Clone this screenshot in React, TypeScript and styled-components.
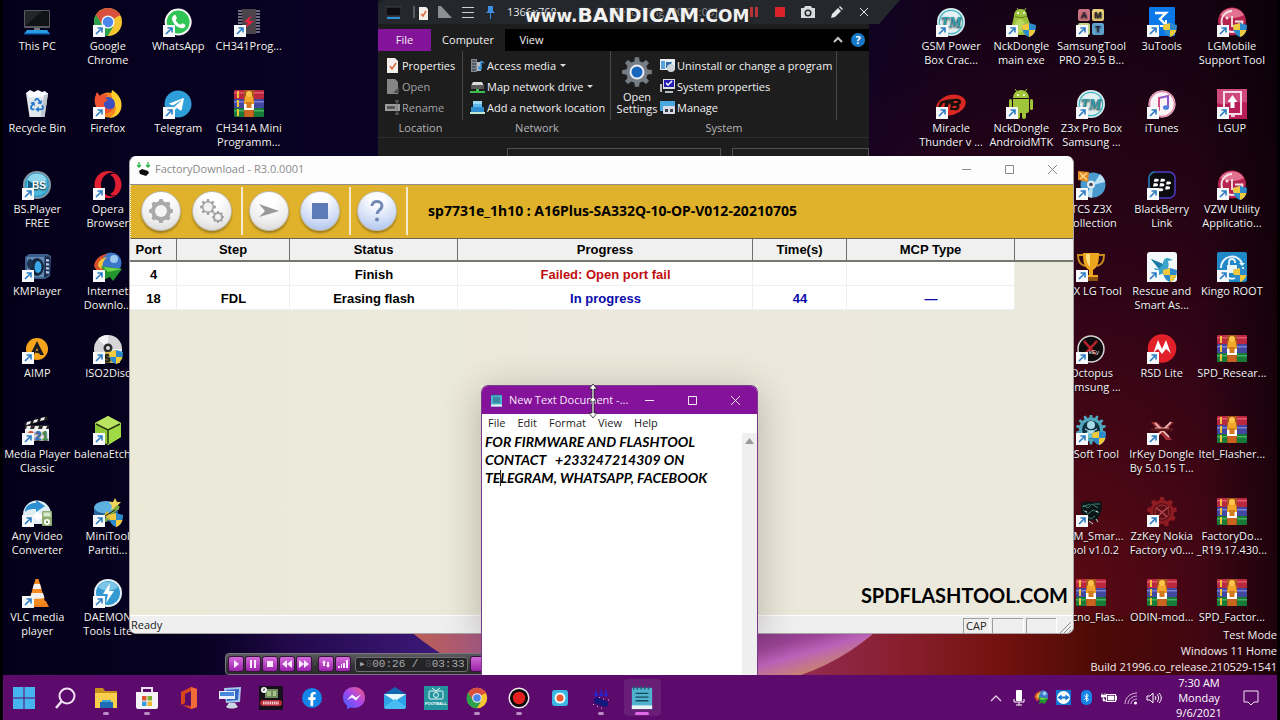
import React from "react";
import styled, { createGlobalStyle } from "styled-components";
import {
  FaBlackberry,
  FaBluetoothB,
  FaFacebookF,
  FaOpera,
  FaRecycle,
  FaTelegramPlane,
} from "react-icons/fa";

const UI_FONT = `"Open Sans", "Noto Sans", sans-serif`;

const GlobalStyle = createGlobalStyle`
  *, *::before, *::after { box-sizing: border-box; }
  html, body { margin: 0; background: #000; }
  body { font-family: ${UI_FONT}; font-size: 11px; line-height: 14px; }
  button, textarea { font: inherit; color: inherit; }
  button { background: none; border: 0; padding: 0; margin: 0; }
  svg { display: block; }
  h1, h2, p, ul { margin: 0; padding: 0; font-size: inherit; font-weight: inherit; }
  li { list-style: none; }
`;

/* ---------- icons ---------- */

type IconProps = { size?: number };

const Svg = ({ size = 30, box = 30, children }: { size?: number; box?: number; children: React.ReactNode }) => (
  <svg width={size} height={size} viewBox={`0 0 ${box} ${box}`} aria-hidden="true">
    {children}
  </svg>
);

const PcIcon = () => (
  <Svg>
    <rect x="2" y="3" width="26" height="18" rx="1" fill="#55585e" />
    <rect x="3" y="4" width="24" height="15" fill="#101216" />
    <path d="M3 19 L20 4 H3Z" fill="#23262b" />
    <path d="M12 21h6v2h-6z" fill="#777" />
    <path d="M5 23h20l3 4H2z" fill="#2b9be8" />
    <path d="M2 26h26v1.5H2z" fill="#0f65b5" />
  </Svg>
);

const ChromeIcon = ({ size = 30 }: IconProps) => (
  <Svg size={size}>
    <circle cx="15" cy="15" r="14" fill="#f7c531" />
    <path d="M15 15 L2.9 8 A14 14 0 0 1 27.1 8 Z" fill="#d9503f" />
    <path d="M15 8.5 H27.4 L26 5.4 L15 1Z" fill="#d9503f" />
    <path d="M2.9 8 L9.4 18.3 L15 21.500 L20 20 L14.500 29 A14 14 0 0 1 2.900 8" fill="#2ba14b" />
    <path d="M2.9 8 L9.4 18.3 L14 12 L8 4Z" fill="#d9503f" />
    <path d="M2.9 8 L9.4 18.3 L15 21.500 L20 20 L14.500 29 A14 14 0 0 1 2.900 8" fill="#2ba14b" />
    <circle cx="15" cy="15" r="6.6" fill="#f4f4f4" />
    <circle cx="15" cy="15" r="5.2" fill="#4c86ea" />
  </Svg>
);

const WhatsAppIcon = () => (
  <Svg>
    <path d="M15 1.5a13.5 13.5 0 1 1-6.4 25.3L1.5 29l2.2-7A13.5 13.5 0 0 1 15 1.5" fill="#f4f8f5" />
    <circle cx="15.2" cy="15" r="11.4" fill="#2fc554" />
    <path d="M10.500 8.500c1-1 2-.8 2.400.200l1 2.400c.2.600-1.400 1.700-1.100 2.300 1 2 2.500 3.300 4.500 4.200.7.300 1.600-1.600 2.200-1.300l2.500 1.200c.8.400.5 2-.3 2.800-1.500 1.300-3.500 1.200-5.700.200-3.400-1.500-5.600-4-6.700-7.200-.6-1.900-.1-3.600 1.200-4.800z" fill="#fff" />
  </Svg>
);

const ChipIcon = () => (
  <Svg>
    {[4, 7, 10, 13, 16, 19, 22, 25].map((y) => (
      <path key={y} d={`M4 ${y}h22`} stroke="#aaa6ae" strokeWidth="1.300" />
    ))}
    <rect x="8" y="2" width="14" height="25" fill="#4b444b" />
    <path d="M18 8l-8 7h4l-3 6 9-7h-5z" fill="#f0203c" />
  </Svg>
);

const BinIcon = () => (
  <Svg>
    <path d="M4 4l22 0-3.500 24H7.500z" fill="#e2e7ec" />
    <path d="M4 4l4-3 4 2 4-2 4 2 3-1 3 3-3 3H7z" fill="#fafcff" />
    <path d="M22 6l4-1-3.500 23h-4z" fill="#bfc8d0" />
    <FaRecycle x="8" y="9" size={14} color="#2179cf" />
  </Svg>
);

const FirefoxIcon = () => (
  <Svg>
    <circle cx="15.500" cy="16" r="12.500" fill="#f8871f" />
    <path d="M19 1c5 3 10 8 9.500 16S22 29 16 29c6-3 8-8 6-13-2-6-5-8-3-15" fill="#ffce2e" />
    <circle cx="15" cy="15" r="7" fill="#3a4fc0" />
    <path d="M2 8c1-2 1-3 2-5l3 4c3-2 6-2 8-1l-3 3 3 2c-2 2-4 1-4 4 0 5 6 6 9 4-3 7-12 8-16 1C2 16 1 12 2 8" fill="#ee5230" />
  </Svg>
);

const TelegramIcon = () => (
  <Svg>
    <circle cx="15" cy="15" r="13.500" fill="#2f9fda" />
    <FaTelegramPlane x="5" y="7" size={17} color="#fff" />
  </Svg>
);

const ArchiveIcon = () => (
  <Svg>
    <rect x="0" y="1" width="30" height="9" rx="1" fill="#b9283f" />
    <path d="M0 3h30v1.500H0z" fill="#e2596a" />
    <rect x="0" y="10" width="30" height="9" rx="1" fill="#42479f" />
    <path d="M0 12h30v1.500H0z" fill="#7d7fd0" />
    <rect x="0" y="19" width="30" height="9" rx="1" fill="#177a38" />
    <path d="M0 21h30v1.500H0z" fill="#46b15f" />
    <path d="M3 2h2v7H3zM3 11h2v7H3zM3 20h2v7H3z" fill="#f0c13c" />
    <rect x="10" y="1" width="10" height="27" fill="#a9561c" />
    <path d="M11 8a4.500 5 0 0 1 8 0l1 7H10z" fill="#f2a72c" />
    <circle cx="15" cy="5" r="3" fill="#ffc54a" />
    <path d="M12 13h6v6h-6z" fill="#d27a1d" />
    <path d="M10 15h2.500v4h5v-4H20v6H10z" fill="#fff" />
    <path d="M11 21h8v7h-8z" fill="#c9651f" />
  </Svg>
);

const BsIcon = () => (
  <Svg>
    <circle cx="15" cy="15" r="14" fill="#8a9aa4" />
    <circle cx="15" cy="15" r="12.300" fill="#2e9cc8" />
    <circle cx="15" cy="15" r="10.500" fill="#4fb9dc" />
    <path d="M5 10a11 11 0 0 1 20 0c-6 3-14 3-20 0" fill="#8fd6ec" />
    <path d="M6 10l6 5-6 5z" fill="#1d5d83" />
    <text x="17" y="19" fontSize="10" fontWeight="700" textAnchor="middle" fill="#fff" fontFamily="Liberation Sans">BS</text>
  </Svg>
);

const OperaIcon = () => (
  <Svg>
    <FaOpera x="1" y="1" size={28} color="#df1f31" />
  </Svg>
);

const KmIcon = () => (
  <Svg>
    <path d="M7 2h18l4 2-1 20-5 3H6L3 24V5z" fill="#3d5f8d" />
    <path d="M23 4l5 1-1 18-5 3z" fill="#1b2c4a" />
    {[7, 11, 15, 19].map((y) => (
      <path key={y} d={`M24 ${y}l3 .5v2l-3 0z`} fill="#b9cde5" />
    ))}
    <path d="M5 5h17v20H5z" fill="#6288b4" />
    <ellipse cx="15" cy="15" rx="7" ry="9" fill="#16273c" />
    <ellipse cx="16" cy="15" rx="3.500" ry="6" fill="#3aa7ea" />
    <ellipse cx="8" cy="12" rx="3" ry="5" fill="#1c3550" />
  </Svg>
);

const IdmIcon = ({ size = 30 }: IconProps) => (
  <Svg size={size}>
    <circle cx="18" cy="11" r="10.500" fill="#3c76c8" />
    <circle cx="21" cy="7" r="4" fill="#9cc9ee" />
    <path d="M1 14C2 6 9 2 15 2c-5 2-7 6-6 12l3 3-6 6z" fill="#d8502c" />
    <path d="M5 14c0-5 4-8 9-9-3 3-5 6-4 10l-2 2z" fill="#f1c53b" />
    <path d="M8 14l21 3-9 12-3-4-9 4c4-4 5-8 0-15" fill="#23952f" />
    <path d="M10 15l19 2-14 3z" fill="#6fd64c" />
  </Svg>
);

const AimpIcon = () => (
  <Svg>
    <circle cx="15" cy="15" r="11" fill="#f6a41c" />
    <path d="M15 7l7 14h-4l-3-7-3 7H8z" fill="#1c1a22" />
    <path d="M10 18l9-2 2 4z" fill="#1c1a22" />
  </Svg>
);

const DiscIcon = () => (
  <Svg>
    <circle cx="15" cy="15" r="14" fill="#d6d5d8" />
    <path d="M15 15L5 5a14 14 0 0 1 10-4zM15 15l10 10a14 14 0 0 0 4-10z" fill="#f3f2f4" />
    <circle cx="15" cy="14" r="4.500" fill="#2a2a2e" />
    <circle cx="15" cy="14" r="2" fill="#ddd" />
    <rect x="10" y="18" width="17" height="11" fill="#d6b44d" />
    <text x="14" y="28" fontSize="10" fontWeight="700" fill="#111" textAnchor="middle" fontFamily="Liberation Sans">S</text>
  </Svg>
);

const MpcIcon = () => (
  <Svg>
    <path d="M2 8L25 1l1 4L3 11z" fill="#1e1e1e" />
    <path d="M5 7l4-1-1 3-4 1zM12 5l4-1-1 3-4 1zM19 3l4-1-1 3-4 1z" fill="#f0f0f0" />
    <path d="M3 10h24v4H3z" fill="#2a2a2a" />
    <path d="M5 11h4l-1 3H4zM13 11h4l-1 3h-4zM21 11h4l-1 3h-4z" fill="#eee" />
    <path d="M3 14h24v12H3z" fill="#f2f3f2" />
    <g fontSize="12" fontWeight="700" textAnchor="middle" fontFamily="Liberation Sans">
      <text x="9" y="25" fill="#d95835">3</text>
      <text x="16" y="25" fill="#3574c8">2</text>
      <text x="23" y="25" fill="#3b9148">1</text>
    </g>
  </Svg>
);

const EtcherIcon = () => (
  <Svg>
    <path d="M15 1l13 7v14l-13 8-13-8V8z" fill="#8fc93a" />
    <path d="M15 1l13 7-13 7L2 8z" fill="#b9e563" />
    <path d="M28 8v14l-13 8V15z" fill="#a0da45" />
    <path d="M3 9l12 6 12-6M15 15v14" stroke="#24350f" strokeWidth="1.500" fill="none" />
  </Svg>
);

const AvcIcon = () => (
  <Svg>
    <path d="M1 18A14 14 0 0 1 29 17V27H4z" fill="#dfeef5" />
    <path d="M3 15c0-7 6-9 11-9V3l9 6-9 6v-3C9 12 6 12 3 15" fill="#2e8fd3" />
    <path d="M28 14c0 6-5 8-11 8v3l-7-6 7-5v3c5 0 9-1 11-3" fill="#fff" />
    <rect x="20" y="14" width="10" height="15" rx="1" fill="#8fae6f" />
    <rect x="21.500" y="15.500" width="7" height="4" fill="#d9ead0" />
    <circle cx="25" cy="25" r="3" fill="#fff" />
    <circle cx="25" cy="25" r="1.200" fill="#6d9a4b" />
  </Svg>
);

const PartitionIcon = () => (
  <Svg>
    <ellipse cx="13" cy="11" rx="12" ry="7" fill="#5cb0e2" />
    <path d="M1 11c3 7 20 7 24 0v9c-3 6-21 6-24 0z" fill="#24619a" />
    <path d="M22 1l2 4 4 0-3 3 1 5-4-2-4 2 1-4-3-4 4 0z" fill="#f1d35a" />
    <path d="M10 24L24 8l3 2-14 15z" fill="#7faa3a" />
    <path d="M14 14l6 6-3 4-6-6z" fill="#d8ba3c" />
    <path d="M12 19l10-6" stroke="#222" />
  </Svg>
);

const VlcIcon = () => (
  <Svg>
    <path d="M6 23h18l3 6H3z" fill="#ef7d1b" />
    <path d="M13.500 1h3l7 24c-4 2-13 2-17 0z" fill="#f58a20" />
    <path d="M12 6h6l1.500 5h-9zM9.500 15h11.500l1.500 5c-4 1-11 1-14.500 0z" fill="#f2efec" />
  </Svg>
);

const DaemonIcon = () => (
  <Svg>
    <circle cx="15" cy="15" r="14" fill="#e6f2f8" />
    <circle cx="15" cy="15" r="12" fill="#359ad2" />
    <path d="M5 9a12 12 0 0 1 20 0c-6 5-14 5-20 0" fill="#7cc6ea" />
    <path d="M17 5l-7 11h5l-2 9 8-12h-5z" fill="#fff" />
  </Svg>
);

const TmIcon = () => (
  <Svg>
    <circle cx="15" cy="15" r="14" fill="#dcecee" />
    <circle cx="15" cy="15" r="12.300" fill="#45b6c4" />
    <circle cx="15" cy="15" r="11" fill="#e4f1f2" />
    <text x="15" y="20" fontSize="14" fontWeight="700" fontStyle="italic" textAnchor="middle" fill="#2c9eb0" fontFamily="Liberation Serif">TM</text>
  </Svg>
);

const DroidRobotIcon = () => (
  <Svg>
    <path d="M8 9c0-5 3-7 7-7s6 3 6 7l3 8-3 11H9L6 18z" fill="#9bc13c" />
    <path d="M9 9c2 2 9 2 12 0" stroke="#5e7d1c" fill="none" />
    <circle cx="12" cy="6" r="1" fill="#fff" />
    <circle cx="18" cy="6" r="1" fill="#fff" />
    <path d="M11 1l2 3M20 1l-2 3" stroke="#9bc13c" />
    <ellipse cx="14" cy="19" rx="5" ry="7" fill="#b7d85d" />
  </Svg>
);

const AmtIcon = () => (
  <Svg>
    <rect x="2" y="2" width="12" height="12" rx="2" fill="#c9717f" />
    <rect x="16" y="2" width="12" height="12" rx="2" fill="#e8cf79" />
    <rect x="2" y="16" width="12" height="12" rx="2" fill="#c5d58c" />
    <rect x="16" y="16" width="12" height="12" rx="2" fill="#5fa3cf" />
    <g fontSize="9" fontWeight="700" fill="#2b2530" textAnchor="middle" fontFamily="Liberation Sans">
      <text x="8" y="11">A</text>
      <text x="22" y="11">M</text>
      <text x="22" y="25">T</text>
    </g>
  </Svg>
);

const ThreeUIcon = () => (
  <Svg>
    <rect x="2" y="0" width="26" height="29" rx="1" fill="#0b78ea" />
    <path d="M8 6h11l-6 6 6 6" fill="none" stroke="#fff" strokeWidth="2.400" />
    <path d="M19 13v6h-6" fill="none" stroke="#fff" strokeWidth="2" />
  </Svg>
);

const LgIcon = () => (
  <Svg>
    <circle cx="15" cy="14.500" r="14" fill="#b5234f" />
    <path d="M3 8a14 14 0 0 1 24 0c-7 4-17 4-24 0" fill="#e2718f" />
    <path d="M15 4a10.500 10.500 0 1 0 10.500 10.500H18" fill="none" stroke="#f6e3e8" strokeWidth="1.800" />
    <path d="M15 9v10h4" fill="none" stroke="#f6e3e8" strokeWidth="1.800" />
    <circle cx="10" cy="11" r="1.500" fill="#f6e3e8" />
  </Svg>
);

const MiracleIcon = () => (
  <Svg>
    <ellipse cx="15" cy="16" rx="15" ry="10" transform="rotate(-15 15 16)" fill="#d92722" />
    <path d="M3 14c4-3 9-4 15-4 5-1 8 1 7 4l-2 2c2 4-2 6-5 5h-4l1-5-2-2-2 6h-3l1-6-2 0-3 5-3 1 3-6z" fill="#17100f" />
    <path d="M18 12h4l-1 2h-4zM17 17h4l-1 2h-4z" fill="#d92722" />
  </Svg>
);

const AndroidIcon = () => (
  <Svg>
    <path d="M7 9a8 8 0 0 1 16 0z" fill="#a0c53a" />
    <path d="M9 0l3 4M21 0l-3 4" stroke="#a0c53a" />
    <path d="M7 10h16v12a2 2 0 0 1-2 2h-1v4a2 2 0 0 1-4 0v-4h-2v4a2 2 0 0 1-4 0v-4H9a2 2 0 0 1-2-2z" fill="#a0c53a" />
    <rect x="3" y="10" width="3" height="11" rx="1.500" fill="#a0c53a" />
    <rect x="24" y="10" width="3" height="11" rx="1.500" fill="#a0c53a" />
    <circle cx="12" cy="6" r="1" fill="#fff" />
    <circle cx="18" cy="6" r="1" fill="#fff" />
  </Svg>
);

const ItunesIcon = () => (
  <Svg>
    <circle cx="15" cy="15" r="13.500" fill="#f9f4f8" />
    <circle cx="15" cy="15" r="12.500" fill="none" stroke="#e78aa8" strokeWidth="1.500" />
    <path d="M12 9l9-2v11" fill="none" stroke="#9158c8" strokeWidth="2" />
    <path d="M12 8v12" stroke="#d44a86" strokeWidth="2" />
    <ellipse cx="10" cy="20.500" rx="3" ry="2.300" fill="#e6527f" />
    <ellipse cx="19" cy="18.500" rx="3" ry="2.300" fill="#4d7be0" />
  </Svg>
);

const LgupIcon = () => (
  <Svg>
    <rect width="30" height="30" fill="#b81e57" />
    <path d="M0 0h30v14C20 10 10 18 0 14z" fill="#cf4a7c" />
    <rect x="7" y="3" width="17" height="22" fill="none" stroke="#f3dce5" strokeWidth="2" />
    <path d="M15.500 6l5 7h-3v6h-4v-6h-3z" fill="#fff" />
    <path d="M14 27h4" stroke="#fff" strokeWidth="1.500" />
  </Svg>
);

const BlueDiscIcon = () => (
  <Svg>
    <circle cx="17" cy="15" r="12.500" fill="#4a9ad0" />
    <path d="M17 15L24 4a13 13 0 0 1 5 8zM17 15L9 25a13 13 0 0 0 7 3z" fill="#b8e0f3" />
    <circle cx="15" cy="14.500" r="4" fill="#dfeaf0" />
    <circle cx="15" cy="14.500" r="1.800" fill="#445" />
    <path d="M2 1l11 1-1 10-10-2z" fill="#e28a1f" />
    <path d="M4 3l7 7M11 3l-7 6" stroke="#ffd98f" strokeWidth="1.500" />
  </Svg>
);

const BlackberryIcon = () => (
  <Svg>
    <rect x="2" y="2" width="26" height="26" rx="6" fill="#0b0b10" stroke="#4b3fc4" strokeWidth="1.500" />
    <path d="M2 20V8a6 6 0 0 1 6-6" fill="none" stroke="#187a9c" strokeWidth="1.500" />
    <FaBlackberry x="6" y="6" size={18} color="#fff" />
  </Svg>
);

const TrophyIcon = () => (
  <Svg>
    <path d="M7 3H2c0 6 3 10 7 11M23 3h5c0 6-3 10-7 11" fill="none" stroke="#c98a1c" strokeWidth="2" />
    <path d="M7 1h16c0 9-1 14-6 17v5h5v5H8v-5h5v-5C8 15 7 10 7 1" fill="#eda51f" />
    <path d="M10 2h4v13c-3-3-4-7-4-13" fill="#ffdf80" />
    <path d="M8 25h14v4H8z" fill="#8a5210" />
  </Svg>
);

const RescueIcon = () => (
  <Svg>
    <rect x="0" y="0" width="30" height="30" rx="3" fill="#f3f9fb" />
    <path d="M4 7l12 5c0-4 2-6 5-6l5 2-5 1c2 7-1 12-9 14l-3 4c1-5 0-8-2-11l5 1z" fill="#3aa3c8" />
    <path d="M4 7l12 5-4 5z" fill="#1d7ba6" />
  </Svg>
);

const KingoIcon = () => (
  <Svg>
    <rect x="0" y="0" width="30" height="30" rx="2" fill="#1f88c7" />
    <path d="M4 16A11 11 0 0 1 25 11M26 15A11 11 0 0 1 8 24" fill="none" stroke="#eaf5fb" strokeWidth="2" />
    <rect x="10" y="13" width="10" height="8" fill="#eaf5fb" />
    <path d="M12 13v-3a3 3 0 0 1 6 0v1" fill="none" stroke="#eaf5fb" strokeWidth="1.800" />
    <path d="M22 11h6l-3 3z" fill="#eaf5fb" />
  </Svg>
);

const OctopusIcon = () => (
  <Svg>
    <circle cx="15" cy="15" r="13" fill="#0f0c0d" stroke="#d7d4d4" strokeWidth="1.500" />
    <path d="M8 7l12 14M21 7L9 20" stroke="#c0222a" strokeWidth="2.500" />
    <text x="18" y="20" fontSize="6" fill="#e8e8e8" textAnchor="middle" fontFamily="Liberation Sans">kEy</text>
  </Svg>
);

const MotorolaIcon = () => (
  <Svg>
    <circle cx="15" cy="14.500" r="14.300" fill="#e2202a" />
    <path d="M6 20L11 6l4 9 4-9 5 14c-2-3-4-4-5-5l-4 5-4-5c-2 1-3 2-5 5" fill="#fff" />
  </Svg>
);

const gearPath = (teeth: number, cx: number, cy: number, outer: number, inner: number) => {
  const points: string[] = [];
  const step = (Math.PI * 2) / teeth;
  for (let i = 0; i < teeth; i += 1) {
    [
      [-0.3, inner],
      [-0.18, outer],
      [0.18, outer],
      [0.3, inner],
    ].forEach(([turn, radius]) => {
      const angle = (i + turn) * step - Math.PI / 2;
      points.push(`${(cx + Math.cos(angle) * radius).toFixed(2)} ${(cy + Math.sin(angle) * radius).toFixed(2)}`);
    });
  }
  return `M${points.join("L")}Z`;
};

const SoftToolIcon = () => (
  <Svg>
    <path d={gearPath(14, 15, 14.5, 15, 12)} fill="#4fa6bd" />
    <circle cx="15" cy="14.500" r="9" fill="#0f3240" />
    <circle cx="15" cy="10" r="4" fill="#a9dbe6" />
    <path d="M9 23c0-11 12-11 12 0z" fill="#6fc0d2" />
    <path d="M9 14l12 6M21 14L9 20" stroke="#cfe9ef" />
  </Svg>
);

const IrKeyIcon = () => (
  <Svg>
    <path d="M4 7l6 0 6 6 7-6h4l-9 9 7 9h-6l-5-6-6 5H5l7-8z" fill="#a12e33" />
    <path d="M8 8l14 14M24 7L10 21" stroke="#f0c9c6" strokeWidth="1.500" />
    <path d="M4 13h22v3H4z" fill="#5f1619" />
    <path d="M8 13h14" stroke="#e5a9a7" />
  </Svg>
);

const SmartIcon = () => (
  <Svg>
    <path d="M5 6l6-2 8 1 6-1 1 7-2 6-4 8-3-3-4 3-4-6-4-3z" fill="#0c1516" />
    <path d="M7 8l5 3 4-4 6 4M7 13l5 4 5-4 6 3M11 19l4 3 4-3M6 10l8-3M18 7l6 0" stroke="#3f7d7a" fill="none" />
    <path d="M9 14l2 1M20 14l2 1M13 24l4 3M20 22l2 3" stroke="#d6e5e4" />
  </Svg>
);

const ZzKeyIcon = () => (
  <Svg>
    <path d={gearPath(9, 15, 15, 15, 12)} fill="#8e1b22" />
    <circle cx="15" cy="15" r="9" fill="#5a1014" />
    <circle cx="15" cy="15" r="7" fill="none" stroke="#a8323a" />
    <path d="M9 11l6 4 7-5M15 15l-5 6M15 15l5 5" stroke="#b2454b" fill="none" strokeWidth="1.500" />
  </Svg>
);

const ShieldBadge = () => (
  <svg width="14" height="14" viewBox="0 0 14 14" aria-hidden="true">
    <path d="M7 0l7 2c0 6-2 10-7 12C2 12 0 8 0 2z" fill="#2e8bcb" />
    <path d="M7 0L0 2c0 2 0 4 1 5h6zM7 7h6.500c-1 3-3 6-6.500 7z" fill="#f0ca3c" />
  </svg>
);

const ShortcutBadge = () => (
  <svg width="12" height="12" viewBox="0 0 12 12" aria-hidden="true">
    <rect width="12" height="12" fill="#f6f8fa" />
    <path d="M3 9l5.500-5.500M4.500 3h4.500v4.500" stroke="#2b7cc4" strokeWidth="1.600" fill="none" />
  </svg>
);

/* ---------- desktop ---------- */

const Screen = styled.div`
  display: flex;
  flex-direction: column;
  height: 100vh;
  min-height: 560px;
  margin: 0 3px;
  overflow: hidden;
`;

const Desktop = styled.main`
  position: relative;
  flex: 1;
  min-height: 0;
  overflow: hidden;
  display: flex;
  justify-content: space-between;
  background:
    linear-gradient(90deg, transparent 94%, rgba(0, 0, 0, 0.45) 100%),
    radial-gradient(ellipse 36% 90% at 84% 88%, rgba(98, 10, 18, 0.9), rgba(66, 4, 24, 0.6) 50%, transparent 100%),
    linear-gradient(90deg, #04001a 0%, #090224 25%, #0c0330 60%, #140218 75%, #140210 100%);
`;

const Wallpaper = styled.svg`
  position: absolute;
  left: 0;
  bottom: 0;
  width: 100%;
  height: 60px;
`;

const IconArea = styled.section<{ $columns: number; $end?: boolean }>`
  position: relative;
  display: grid;
  grid-template-columns: repeat(${(p) => p.$columns}, 1fr);
  width: ${(p) => (p.$end ? "351px" : "282px")};
  padding: 4px 0 18px;
  margin-right: ${(p) => (p.$end ? "10px" : "0")};
  margin-left: ${(p) => (p.$end ? "0" : "-1px")};
`;

const IconColumn = styled.ul`
  display: grid;
  grid-template-rows: repeat(8, 1fr);
  min-width: 0;
`;

const Shortcut = styled.button`
  display: flex;
  flex-direction: column;
  align-items: center;
  gap: 2px;
  width: 100%;
  padding-top: 3px;
  color: #f4f2f5;
  text-align: center;
  text-shadow: 0 1px 2px #000;
`;

const ShortcutLabel = styled.span`
  white-space: pre;
`;

const Picture = styled.span`
  position: relative;
  width: 30px;
  height: 30px;
`;

const Badge = styled.span<{ $side: "left" | "right" }>`
  position: absolute;
  bottom: 0;
  ${(p) => p.$side}: 0;
`;

type Item = { label: string; icon: React.ReactNode; link?: boolean; shield?: boolean };

const leftColumns: Item[][] = [
  [
    { label: "This PC", icon: <PcIcon /> },
    { label: "Recycle Bin", icon: <BinIcon /> },
    { label: "BS.Player\nFREE", icon: <BsIcon />, link: true },
    { label: "KMPlayer", icon: <KmIcon />, link: true },
    { label: "AIMP", icon: <AimpIcon />, link: true },
    { label: "Media Player\nClassic", icon: <MpcIcon />, link: true },
    { label: "Any Video\nConverter", icon: <AvcIcon />, link: true },
    { label: "VLC media\nplayer", icon: <VlcIcon />, link: true },
  ],
  [
    { label: "Google\nChrome", icon: <ChromeIcon />, link: true },
    { label: "Firefox", icon: <FirefoxIcon />, link: true },
    { label: "Opera\nBrowser", icon: <OperaIcon />, link: true },
    { label: "Internet\nDownlo...", icon: <IdmIcon />, link: true },
    { label: "ISO2Disc", icon: <DiscIcon />, link: true, shield: true },
    { label: "balenaEtcher", icon: <EtcherIcon />, link: true },
    { label: "MiniTool\nPartiti...", icon: <PartitionIcon />, link: true, shield: true },
    { label: "DAEMON\nTools Lite", icon: <DaemonIcon />, link: true },
  ],
  [
    { label: "WhatsApp", icon: <WhatsAppIcon />, link: true },
    { label: "Telegram", icon: <TelegramIcon />, link: true },
  ],
  [
    { label: "CH341Prog...", icon: <ChipIcon />, link: true },
    { label: "CH341A Mini\nProgramm...", icon: <ArchiveIcon /> },
  ],
];

const rightColumns: Item[][] = [
  [
    { label: "GSM Power\nBox Crac...", icon: <TmIcon />, link: true },
    { label: "Miracle\nThunder v ...", icon: <MiracleIcon />, link: true },
  ],
  [
    { label: "NckDongle\nmain exe", icon: <DroidRobotIcon />, link: true, shield: true },
    { label: "NckDongle\nAndroidMTK", icon: <AndroidIcon />, link: true },
  ],
  [
    { label: "SamsungTool\nPRO 29.5 B...", icon: <AmtIcon />, link: true },
    { label: "Z3x Pro Box\nSamsung ...", icon: <TmIcon />, link: true },
    { label: "TCS Z3X\nCollection", icon: <BlueDiscIcon />, link: true },
    { label: "Z3X LG Tool", icon: <TrophyIcon />, link: true },
    { label: "Octopus\nSamsung ...", icon: <OctopusIcon />, link: true },
    { label: "E-Soft Tool", icon: <SoftToolIcon />, link: true, shield: true },
    { label: "GSM_Smar...\nTool v1.0.2", icon: <SmartIcon />, link: true },
    { label: "Tecno_Flas...", icon: <ArchiveIcon /> },
  ],
  [
    { label: "3uTools", icon: <ThreeUIcon />, link: true, shield: true },
    { label: "iTunes", icon: <ItunesIcon />, link: true },
    { label: "BlackBerry\nLink", icon: <BlackberryIcon />, link: true },
    { label: "Rescue and\nSmart As...", icon: <RescueIcon />, link: true, shield: true },
    { label: "RSD Lite", icon: <MotorolaIcon />, link: true },
    { label: "IrKey Dongle\nBy 5.0.15 T...", icon: <IrKeyIcon />, link: true },
    { label: "ZzKey Nokia\nFactory v0....", icon: <ZzKeyIcon />, link: true },
    { label: "ODIN-mod...", icon: <ArchiveIcon /> },
  ],
  [
    { label: "LGMobile\nSupport Tool", icon: <LgIcon />, link: true, shield: true },
    { label: "LGUP", icon: <LgupIcon />, link: true },
    { label: "VZW Utility\nApplicatio...", icon: <LgIcon />, link: true, shield: true },
    { label: "Kingo ROOT", icon: <KingoIcon />, link: true, shield: true },
    { label: "SPD_Resear...", icon: <ArchiveIcon /> },
    { label: "Itel_Flasher...", icon: <ArchiveIcon /> },
    { label: "FactoryDo...\n_R19.17.430...", icon: <ArchiveIcon /> },
    { label: "SPD_Factor...", icon: <ArchiveIcon /> },
  ],
];

const Icons = ({ columns, end }: { columns: Item[][]; end?: boolean }) => (
  <IconArea $columns={columns.length} $end={end}>
    {columns.map((column, index) => (
      <IconColumn key={index}>
        {column.map((item) => (
          <li key={item.label}>
            <Shortcut type="button">
              <Picture>
                {item.icon}
                {item.link && (
                  <Badge $side="left">
                    <ShortcutBadge />
                  </Badge>
                )}
                {item.shield && (
                  <Badge $side="right">
                    <ShieldBadge />
                  </Badge>
                )}
              </Picture>
              <ShortcutLabel>{item.label}</ShortcutLabel>
            </Shortcut>
          </li>
        ))}
      </IconColumn>
    ))}
  </IconArea>
);

const BuildNote = styled.p`
  position: absolute;
  right: 0;
  bottom: 0;
  color: #f3eef0;
  text-align: right;
  line-height: 16px;
  white-space: pre-line;
`;

/* ---------- file explorer ---------- */

const Explorer = styled.section`
  position: absolute;
  left: 375px;
  top: 0;
  width: 491px;
  height: 170px;
  padding-top: 29px;
  background: #1d1d1e;
  color: #f1f1f1;
`;

const Tabs = styled.nav`
  display: flex;
  align-items: center;
  height: 22px;
  padding-right: 4px;
  background: #000;
`;

const Tab = styled.button<{ $kind?: "file" | "active" }>`
  height: 22px;
  width: ${(p) => (p.$kind === "active" ? "74px" : "53px")};
  background: ${(p) => (p.$kind === "file" ? "#83149a" : p.$kind === "active" ? "#1d1d1e" : "none")};
`;

const TabTools = styled.div`
  display: flex;
  gap: 8px;
  align-items: center;
  margin-left: auto;
`;

const Ribbon = styled.div`
  display: flex;
  height: 87px;
  border-bottom: 1px solid #2e2e30;
`;

const Group = styled.section<{ $width: number }>`
  position: relative;
  display: flex;
  flex-direction: column;
  justify-content: space-between;
  align-items: center;
  width: ${(p) => p.$width}px;
  padding: 4px 0 2px;

  &::after {
    content: "";
    position: absolute;
    right: 0;
    top: 0;
    height: 69px;
    border-right: 1px solid #48484a;
  }
`;

const GroupRow = styled.div`
  display: flex;
  gap: 2px;
  width: 100%;
  padding-left: 7px;
`;

const Commands = styled.div`
  display: flex;
  flex-direction: column;
`;

const Command = styled.button<{ $muted?: boolean }>`
  display: flex;
  align-items: center;
  gap: 2px;
  height: 21px;
  white-space: nowrap;
  color: ${(p) => (p.$muted ? "#a3a3a5" : "#f1f1f1")};
`;

const BigCommand = styled.button`
  display: flex;
  flex-direction: column;
  align-items: center;
  gap: 4px;
  width: 42px;
  margin-left: -2px;
  line-height: 12px;
`;

const GroupName = styled.h2`
  color: #b5b5b6;
`;

const Caret = styled.span`
  border: 3px solid transparent;
  border-top-color: #ddd;
  border-bottom: 0;
  margin-left: 2px;
`;

const AddressRow = styled.div`
  display: flex;
  gap: 11px;
  height: 24px;
  padding: 10px 0 0 129px;
`;

const AddressBox = styled.div<{ $grow: number }>`
  flex: ${(p) => p.$grow};
  border: 1px solid #515153;
`;

const DocCheck = ({ muted }: { muted?: boolean }) => (
  <Svg size={15} box={15}>
    <path d="M2 0h8l3 3v12H2z" fill={muted ? "#858587" : "#f2efec"} />
    {muted ? <path d="M8 14l6-6v6z" fill="#4f4f51" /> : <path d="M5 8l2 3 4-6" fill="none" stroke="#e0673a" strokeWidth="1.500" />}
  </Svg>
);

const RenameGlyph = () => (
  <Svg size={15} box={15}>
    <rect x="0" y="4" width="15" height="7" fill="#9c9c9e" />
    <rect x="2" y="6" width="8" height="3" fill="#555" />
    <path d="M12 1v13M10 1h4M10 14h4" stroke="#777" fill="none" />
  </Svg>
);

const MediaGlyph = () => (
  <Svg size={15} box={15}>
    <path d="M1 1h6v13H1z" fill="#7e868f" />
    <path d="M2 3h4M2 6h4M2 9h4M2 12h4" stroke="#2f343a" />
    <path d="M7 4h4v9H7z" fill="#b3bcc6" />
    <path d="M11 3v7" stroke="#3d95dc" strokeWidth="1.500" />
    <circle cx="10" cy="10" r="2" fill="#3d95dc" />
    <path d="M11 3l3 2" stroke="#3d95dc" strokeWidth="1.500" />
  </Svg>
);

const DriveGlyph = () => (
  <Svg size={15} box={15}>
    <path d="M3 3h9l2 4H1z" fill="#dcdcdc" />
    <rect x="1" y="6" width="13" height="4" fill="#5a5a5c" />
    <path d="M0 12h15v2H0z" fill="#3dbb50" />
    <path d="M6 10h3v3H6z" fill="#3dbb50" />
  </Svg>
);

const LocationGlyph = () => (
  <Svg size={15} box={15}>
    <path d="M3 1h9v9H3z" fill="#5cb7ea" />
    <path d="M1 7h13v5H1z" fill="#2f8ed0" />
    <path d="M3 1h9v3H3z" fill="#9ad8f5" />
    <path d="M0 12h15v2H0z" fill="#bfe8d0" />
  </Svg>
);

const ProgramGlyph = () => (
  <Svg size={15} box={15}>
    <rect x="0" y="1" width="15" height="11" fill="#e9eef2" />
    <rect x="1" y="3" width="4" height="8" fill="#57a1d8" />
    <path d="M6 4h6l-3 6H6z" fill="#2b6cad" />
    <circle cx="11" cy="10" r="4" fill="#cfd6db" />
  </Svg>
);

const SystemGlyph = () => (
  <Svg size={15} box={15}>
    <rect x="3" y="0" width="12" height="10" fill="#dadde4" />
    <rect x="4" y="1" width="10" height="7" fill="#241fb0" />
    <path d="M6 4l2 2 4-4" stroke="#fff" fill="none" strokeWidth="1.500" />
    <path d="M0 5h2v8H0zM5 12h8v2H5z" fill="#b8bcc4" />
  </Svg>
);

const ManageGlyph = () => (
  <Svg size={15} box={15}>
    <rect x="0" y="1" width="15" height="10" fill="#4aa7de" />
    <rect x="3" y="6" width="12" height="8" rx="1" fill="#d8dbe3" />
    <rect x="5" y="9" width="3" height="3" fill="#3a3d49" />
    <rect x="10" y="9" width="3" height="3" fill="#3a3d49" />
  </Svg>
);

const ExplorerWindow = () => (
  <Explorer aria-label="File Explorer">
    <Tabs>
      <Tab type="button" $kind="file">File</Tab>
      <Tab type="button" $kind="active">Computer</Tab>
      <Tab type="button">View</Tab>
      <TabTools>
        <Svg size={10} box={10}>
          <path d="M1 7l4-4 4 4" stroke="#c8c8c8" strokeWidth="2" fill="none" />
        </Svg>
        <Svg size={14} box={14}>
          <circle cx="7" cy="7" r="7" fill="#1878c8" />
          <text x="7" y="11" fontSize="11" fontWeight="700" textAnchor="middle" fill="#fff">?</text>
        </Svg>
      </TabTools>
    </Tabs>
    <Ribbon>
      <Group $width={85}>
        <GroupRow>
          <Commands>
            <Command type="button"><DocCheck />Properties</Command>
            <Command type="button" $muted><DocCheck muted />Open</Command>
            <Command type="button" $muted><RenameGlyph />Rename</Command>
          </Commands>
        </GroupRow>
        <GroupName>Location</GroupName>
      </Group>
      <Group $width={148}>
        <GroupRow>
          <Commands>
            <Command type="button"><MediaGlyph />Access media<Caret /></Command>
            <Command type="button"><DriveGlyph />Map network drive<Caret /></Command>
            <Command type="button"><LocationGlyph />Add a network location</Command>
          </Commands>
        </GroupRow>
        <GroupName>Network</GroupName>
      </Group>
      <Group $width={226}>
        <GroupRow>
          <BigCommand type="button">
            <Svg size={32} box={32}>
              <path d={gearPath(8, 16, 17, 15, 11)} fill="#777d85" />
              <circle cx="16" cy="17" r="7.500" fill="#e8edf2" />
              <circle cx="16" cy="17" r="5.500" fill="#1b66bd" />
            </Svg>
            Open Settings
          </BigCommand>
          <Commands>
            <Command type="button"><ProgramGlyph />Uninstall or change a program</Command>
            <Command type="button"><SystemGlyph />System properties</Command>
            <Command type="button"><ManageGlyph />Manage</Command>
          </Commands>
        </GroupRow>
        <GroupName>System</GroupName>
      </Group>
    </Ribbon>
    <AddressRow>
      <AddressBox $grow={214} />
      <AddressBox $grow={137} />
    </AddressRow>
  </Explorer>
);

/* ---------- recorder bar ---------- */

const Recorder = styled.section`
  position: absolute;
  left: 375px;
  top: 0;
  display: flex;
  align-items: center;
  width: 522px;
  height: 24px;
  padding: 0 31px 0 8px;
  gap: 10px;
  background: #24272c;
  color: #e3e4e6;
  clip-path: polygon(1% 0, 100% 0, 96% 100%, 0 100%, 0 20%);
`;

const RecorderTools = styled.div`
  display: flex;
  align-items: center;
  gap: 16px;
  margin-left: auto;
`;

const RecorderTime = styled.span`
  margin-left: 46px;
  color: #8d9094;
`;

const Watermark = styled.p`
  position: absolute;
  left: 522px;
  top: 4px;
  color: #f2f2f2;
  font-family: "DejaVu Sans", sans-serif;
  font-size: 17px;
  font-weight: 700;
  line-height: 22px;
  white-space: nowrap;
  text-shadow: 1px 1px 1px #222, -1px -1px 1px #333;

  b {
    font-size: 20px;
  }
`;

const RecorderBar = () => (
  <Recorder aria-label="Screen recorder">
    <Svg size={15} box={15}>
      <rect x="0" y="2" width="15" height="9" fill="#0d0d0f" stroke="#444" />
      <path d="M1 12h13v2H1z" fill="#2b8fd6" />
    </Svg>
    <Svg size={17} box={17}>
      <path d="M3 2v12" stroke="#5a5a5d" strokeWidth="2" />
      <path d="M8 3h7l2 2v11H8z" fill="#f3efe9" />
      <path d="M10 10l2 2 3-5" stroke="#dd6a3d" strokeWidth="1.500" fill="none" />
    </Svg>
    <Svg size={14} box={14}>
      <path d="M0 1h3l11 12H0z" fill="#8e8f91" />
    </Svg>
    <Svg size={12} box={12}>
      <path d="M0 1.500h12M0 6.500h12M0 11.500h12" stroke="#cfd0d2" />
    </Svg>
    <Svg size={13} box={13}>
      <path d="M4 0h5v5l2 2H2l2-2zM6 7h1v6H6z" fill="#3f8fe0" />
    </Svg>
    <span>1366x768</span>
    <RecorderTime>Recording [00:02:05]</RecorderTime>
    <RecorderTools>
      <button type="button" aria-label="Pause">
        <Svg size={10} box={10}>
          <path d="M1 0h3v10H1zM6 0h3v10H6z" fill="#b53439" />
        </Svg>
      </button>
      <button type="button" aria-label="Stop">
        <Svg size={10} box={10}>
          <rect width="10" height="10" fill="#dc2228" />
        </Svg>
      </button>
      <button type="button" aria-label="Screenshot">
        <Svg size={14} box={14}>
          <path d="M0 3h3l1-2h6l1 2h3v10H0z" fill="#d9dadc" />
          <circle cx="7" cy="8" r="3.500" fill="#24272c" />
          <circle cx="7" cy="8" r="2" fill="#d9dadc" />
        </Svg>
      </button>
      <button type="button" aria-label="Draw">
        <Svg size={12} box={12}>
          <path d="M0 12l1-4 6-6 3 3-6 6zM8 1l1-1 3 3-1 1z" fill="#e5e6e8" />
        </Svg>
      </button>
      <button type="button" aria-label="Close">
        <Svg size={10} box={10}>
          <path d="M1 1l8 8M9 1l-8 8" stroke="#e5e6e8" />
        </Svg>
      </button>
    </RecorderTools>
  </Recorder>
);

/* ---------- flash tool window ---------- */

const FlashWindow = styled.section`
  position: absolute;
  inset: 156px 203px 41px 126px;
  display: flex;
  flex-direction: column;
  overflow: hidden;
  border: 1px solid #a8a5a7;
  border-top-color: #fff;
  border-radius: 7px;
  background: #fff;
  color: #000;
`;

const TitleBar = styled.header`
  display: flex;
  align-items: center;
  gap: 4px;
  height: 28px;
  flex: none;
  padding: 0 15px 3px 7px;
  border-bottom: 1px solid #8f8f8f;
  background: #fdfdfd;
  color: #8b8b8b;
`;

const WindowButtons = styled.div<{ $gap: number }>`
  display: flex;
  gap: ${(p) => p.$gap}px;
  margin-left: auto;
`;

const Control = ({ label, path }: { label: string; path: string }) => (
  <button type="button" aria-label={label}>
    <svg width="11" height="11" viewBox="0 0 11 11" aria-hidden="true">
      <path d={path} fill="none" stroke="currentColor" />
    </svg>
  </button>
);

const Controls = ({ gap }: { gap: number }) => (
  <WindowButtons $gap={gap}>
    <Control label="Minimize" path="M1 5.500h9" />
    <Control label="Maximize" path="M1.500 1.500h8v8h-8z" />
    <Control label="Close" path="M1 1l9 9M10 1l-9 9" />
  </WindowButtons>
);

const Toolbar = styled.div`
  display: flex;
  align-items: center;
  height: 54px;
  flex: none;
  padding: 0 0 2px 10px;
  border-bottom: 1px solid #6c6450;
  border-left: 1px dotted #fff;
  background: #e0b22b;
`;

const ToolSet = styled.div`
  display: flex;
  gap: 11px;
  height: 48px;
  align-items: center;
  margin-right: 6px;
  padding-right: 9px;
  border-right: 2px solid #f3ead0;
`;

const ToolButton = styled.button<{ $blue?: boolean }>`
  display: grid;
  place-items: center;
  width: 40px;
  height: 40px;
  border-radius: 50%;
  border: 1px solid #bdb7a8;
  background: ${(p) =>
    p.$blue
      ? "radial-gradient(circle at 50% 15%, #fbfcff 20%, #d3dff6 60%, #a3bdec)"
      : "radial-gradient(circle at 50% 20%, #ffffff 20%, #ececec 65%, #cfcfcf)"};
  box-shadow: 0 2px 2px rgba(90, 70, 20, 0.5);
`;

const Firmware = styled.h1`
  margin-left: 14px;
  font-family: "Noto Sans", sans-serif;
  font-size: 14px;
  line-height: 18px;
  font-weight: 700;
  white-space: nowrap;
`;

const PortArea = styled.div`
  flex: 1;
  min-height: 0;
  background: linear-gradient(90deg, #ebead9, #ece9dc 50%, #ebe8dc);
`;

const PortTable = styled.table`
  width: 100%;
  table-layout: fixed;
  border-collapse: separate;
  border-spacing: 0;
  font-family: "Liberation Sans", Arial, sans-serif;
  font-size: 13px;
  font-weight: 700;
  line-height: 16px;
  text-align: center;

  th {
    height: 23px;
    padding: 0;
    background: #f0f0f0;
    border-right: 1px solid #6e6e6e;
    border-bottom: 2px solid #77776f;
  }
  th:first-child {
    padding-right: 9px;
  }
  th:last-child {
    border-right: 0;
  }
  td {
    height: 24px;
    padding: 2px 0 0 1px;
    background: #fff;
    border-right: 1px solid #efefef;
    border-bottom: 1px solid #efefef;
  }
  td:last-child {
    background: none;
    border: 0;
  }
`;

const Cell = styled.td<{ $tone?: "bad" | "busy" }>`
  color: ${(p) => (p.$tone === "bad" ? "#c00d10" : p.$tone === "busy" ? "#0a0aac" : "#000")};
`;

const Site = styled.p`
  position: absolute;
  right: 5px;
  bottom: 26px;
  font-family: Lato, sans-serif;
  font-size: 20px;
  line-height: 24px;
  font-weight: 700;
`;

const StatusBar = styled.footer`
  display: flex;
  align-items: center;
  height: 18px;
  flex: none;
  padding: 0 2px 0 1px;
  border-top: 1px solid #fff;
  background: #f0eff0;
  color: #222;
  line-height: 17px;
`;

const StatusBoxes = styled.div`
  display: flex;
  align-items: flex-end;
  gap: 3px;
  height: 17px;
  margin-left: auto;
`;

const StatusBox = styled.span<{ $width: number }>`
  width: ${(p) => p.$width}px;
  height: 15px;
  padding-left: 2px;
  line-height: 14px;
  border: solid #9c9c9c;
  border-width: 1px 0 0 1px;
  box-shadow: 1px 0 0 #fff;
`;

const columnWidths = [47, 113, 168, 295, 94, 168];

const FlashTool = () => (
  <FlashWindow aria-label="FactoryDownload">
    <TitleBar>
      <Svg size={14} box={14}>
        <path d="M2 0v5M0 3l2 2 2-2M11 0v5M9 3l2 2 2-2" stroke="#2bb54a" strokeWidth="1.300" fill="none" />
        <path d="M2 9l3-2 6 2 1 2-3 3-6-2z" fill="#0c0c0c" />
      </Svg>
      <span>FactoryDownload - R3.0.0001</span>
      <Controls gap={32} />
    </TitleBar>
    <Toolbar>
      <ToolSet>
        <ToolButton type="button" aria-label="Settings">
          <Svg size={28} box={28}>
            <path d={gearPath(8, 14, 14, 12, 10)} fill="#a9a9a9" />
            <circle cx="14" cy="14" r="6" fill="#f4f4f4" />
          </Svg>
        </ToolButton>
        <ToolButton type="button" aria-label="Options">
          <Svg size={28} box={28}>
            <path d={gearPath(8, 10, 10, 8, 6)} fill="#a3a3a3" />
            <circle cx="10" cy="10" r="4.500" fill="#f2f2f2" />
            <path d={gearPath(8, 20, 20, 6, 5)} fill="#a3a3a3" />
            <circle cx="20" cy="20" r="3" fill="#f2f2f2" />
          </Svg>
        </ToolButton>
      </ToolSet>
      <ToolSet>
        <ToolButton type="button" aria-label="Start">
          <Svg size={28} box={28}>
            <path d="M4 7l20 7-20 6 6-6z" fill="#999" />
          </Svg>
        </ToolButton>
        <ToolButton type="button" aria-label="Stop" $blue>
          <Svg size={28} box={28}>
            <rect x="6" y="6" width="16" height="16" fill="#5a7bb5" />
          </Svg>
        </ToolButton>
      </ToolSet>
      <ToolSet>
        <ToolButton type="button" aria-label="Help" $blue>
          <Svg size={28} box={28}>
            <path d="M9 9c0-6 10-6 10 0 0 4-5 4-5 8" fill="none" stroke="#7389b5" strokeWidth="3" />
            <circle cx="14" cy="22.500" r="2" fill="#7389b5" />
          </Svg>
        </ToolButton>
      </ToolSet>
      <Firmware>sp7731e_1h10 : A16Plus-SA332Q-10-OP-V012-20210705</Firmware>
    </Toolbar>
    <PortArea>
      <PortTable>
        <colgroup>
          {columnWidths.map((width, index) => (
            <col key={index} width={width} />
          ))}
          <col />
        </colgroup>
        <thead>
          <tr>
            {["Port", "Step", "Status", "Progress", "Time(s)", "MCP Type", ""].map((name, index) => (
              <th key={index}>{name}</th>
            ))}
          </tr>
        </thead>
        <tbody>
          <tr>
            <Cell>4</Cell>
            <Cell />
            <Cell>Finish</Cell>
            <Cell $tone="bad">Failed: Open port fail</Cell>
            <Cell />
            <Cell />
            <Cell />
          </tr>
          <tr>
            <Cell>18</Cell>
            <Cell>FDL</Cell>
            <Cell>Erasing flash</Cell>
            <Cell $tone="busy">In progress</Cell>
            <Cell $tone="busy">44</Cell>
            <Cell $tone="busy">—</Cell>
            <Cell />
          </tr>
        </tbody>
      </PortTable>
    </PortArea>
    <Site>SPDFLASHTOOL.COM</Site>
    <StatusBar>
      <span>Ready</span>
      <StatusBoxes>
        <StatusBox $width={26}>CAP</StatusBox>
        <StatusBox $width={31} />
        <StatusBox $width={30} />
        <Svg size={12} box={12}>
          <path d="M1 12L12 1M5 12l7-7M9 12l3-3" stroke="#8f8f8f" />
        </Svg>
      </StatusBoxes>
    </StatusBar>
  </FlashWindow>
);

/* ---------- media player ---------- */

const Player = styled.section`
  position: absolute;
  left: 222px;
  bottom: 0;
  display: flex;
  align-items: center;
  gap: 3px;
  width: 280px;
  height: 22px;
  padding: 0 3px;
  border: 1px solid #77777c;
  border-radius: 4px 0 0 4px;
  background: linear-gradient(#5c5c60, #343437 60%, #2b2b2e);
`;

const PlayerButton = styled.button`
  display: grid;
  place-items: center;
  width: 14px;
  height: 14px;
  border-radius: 2px;
  background: linear-gradient(#d56bdb, #9b23ab);
  box-shadow: 0 0 0 1px #3a123f;
`;

const PlayerGap = styled.span`
  width: 2px;
  height: 2px;
  border-radius: 50%;
  background: #555;
`;

const Display = styled.output`
  flex: none;
  width: 113px;
  height: 15px;
  margin-left: 2px;
  padding-left: 3px;
  border: 1px solid #6f6f74;
  border-radius: 3px;
  background: #242427;
  color: #a9aaad;
  font-family: "Liberation Mono", monospace;
  font-size: 11px;
  line-height: 13px;
  white-space: pre;
`;

const Dim = styled.span`
  color: #48494c;
`;

const playerGlyphs: [string, string][] = [
  ["Play", "M3 1l5 4-5 4z"],
  ["Pause", "M2 1h2v8H2zM6 1h2v8H6z"],
  ["Stop", "M2 2h6v6H2z"],
  ["Rewind", "M5 1v8L0 5zM10 1v8L5 5z"],
  ["Forward", "M0 1l5 4-5 4zM5 1l5 4-5 4z"],
  ["Repeat", "M1 4l2-3 2 3H4v3H2V4zM9 6L7 9 5 6h1V3h2v3z"],
  ["Equalizer", "M0 7h2v2H0zM3 5h1v4H3zM5 4h2v5H5zM8 1h2v8H8z"],
];

const MediaPlayer = () => (
  <Player aria-label="Media player">
    {playerGlyphs.map(([label, path], index) => (
      <React.Fragment key={label}>
        {index === 5 && <PlayerGap />}
        <PlayerButton type="button" aria-label={label}>
          <Svg size={10} box={10}>
            <path d={path} fill="#fdeaff" />
          </Svg>
        </PlayerButton>
      </React.Fragment>
    ))}
    <Display>
      ▸<Dim>8</Dim>00:26 / <Dim>8</Dim>03:33
    </Display>
    <PlayerButton type="button" aria-label="Volume" />
  </Player>
);

/* ---------- notepad ---------- */

const Notepad = styled.section`
  position: absolute;
  left: 478px;
  top: 385px;
  bottom: 0;
  display: flex;
  flex-direction: column;
  width: 277px;
  overflow: hidden;
  border: 1px solid #7d3a8a;
  border-bottom: 0;
  border-radius: 7px 7px 0 0;
  background: #fff;
  color: #1d1d1d;
`;

const NoteShadow = styled.div`
  position: absolute;
  left: 478px;
  top: 385px;
  bottom: 41px;
  width: 277px;
  box-shadow: 0 6px 36px rgba(50, 45, 30, 0.3);
`;

const NoteTitle = styled.header`
  display: flex;
  align-items: center;
  gap: 6px;
  height: 28px;
  flex: none;
  padding: 0 16px 0 8px;
  background: #85129a;
  color: #f6e9f8;
`;

const Menu = styled.nav`
  display: flex;
  gap: 12px;
  height: 19px;
  flex: none;
  padding: 0 0 2px 6px;
`;

const Page = styled.div`
  display: flex;
  flex: 1;
  min-height: 0;
`;

const NoteText = styled.textarea`
  flex: 1;
  min-width: 0;
  padding: 0 0 0 3px;
  border: 0;
  outline: 0;
  resize: none;
  overflow: hidden;
  background: #fff;
  color: #000;
  font-family: Lato, sans-serif;
  font-size: 14px;
  font-style: italic;
  font-weight: 700;
  line-height: 18px;
`;

const Track = styled.div`
  width: 15px;
  padding: 4px 3px;
  background: #f0eff0;
`;

const TextCaret = styled.span`
  position: absolute;
  left: 18px;
  top: 84px;
  height: 16px;
  border-left: 1px solid #222;
`;

const PadIcon = ({ size = 13 }: IconProps) => (
  <Svg size={size} box={26}>
    <rect x="2" y="2" width="22" height="23" fill="#4fb3cf" />
    <rect x="2" y="21" width="22" height="4" fill="#e8f3f5" />
    <path d="M4 0v4M8 0v4M12 0v4M16 0v4M20 0v4" stroke="#1f6178" strokeWidth="1.500" />
    <path d="M6 8h14M6 12h14M6 16h14" stroke="#134a5c" strokeWidth="1.500" />
  </Svg>
);

const NotepadWindow = () => (
  <Notepad aria-label="Notepad">
    <NoteTitle>
      <PadIcon />
      <span>New Text Document -...</span>
      <Controls gap={32} />
    </NoteTitle>
    <Menu>
      {["File", "Edit", "Format", "View", "Help"].map((name) => (
        <button type="button" key={name}>
          {name}
        </button>
      ))}
    </Menu>
    <Page>
      <NoteText
        aria-label="Document text"
        spellCheck={false}
        defaultValue={"FOR FIRMWARE AND FLASHTOOL\nCONTACT   +233247214309 ON\nTELEGRAM, WHATSAPP, FACEBOOK"}
      />
      <Track>
        <Svg size={9} box={9}>
          <path d="M0 7l4.500-6L9 7z" fill="#9a9a9a" />
        </Svg>
      </Track>
    </Page>
    <TextCaret />
  </Notepad>
);

const Pointer = styled.svg`
  position: absolute;
  left: 584px;
  top: 383px;
`;

/* ---------- taskbar ---------- */

const Taskbar = styled.footer`
  display: flex;
  align-items: center;
  justify-content: space-between;
  height: 45px;
  flex: none;
  background: #5c0a6c;
  color: #fff;
`;

const Apps = styled.nav`
  display: flex;
  width: 660px;
  height: 45px;
`;

const AppButton = styled.button<{ $state?: "open" | "active" }>`
  position: relative;
  display: grid;
  place-items: center;
  flex: 1;
  margin: 4px 2px;
  border-radius: 4px;
  background: ${(p) => (p.$state === "active" ? "rgba(255,255,255,0.08)" : "none")};

  &::after {
    content: "";
    position: absolute;
    bottom: 1px;
    height: 3px;
    border-radius: 2px;
    width: ${(p) => (p.$state === "active" ? "14px" : p.$state === "open" ? "6px" : "0")};
    background: ${(p) => (p.$state === "active" ? "#e06bea" : "#b98cc4")};
  }
`;

const Tray = styled.div`
  display: flex;
  align-items: center;
  padding-right: 17px;
`;

const TrayIcons = styled.div`
  display: flex;
  width: 180px;
`;

const TrayButton = styled.button`
  display: grid;
  place-items: center;
  flex: 1;
  min-width: 18px;
  height: 24px;
`;

const Clock = styled.time`
  width: 68px;
  margin-right: 9px;
  line-height: 15px;
  text-align: center;
  white-space: pre-line;
`;

const apps: { label: string; state?: "open" | "active"; icon: React.ReactNode }[] = [
  {
    label: "Start",
    icon: (
      <Svg size={24} box={24}>
        <path d="M1 1h10.500v10.500H1zM12.500 1H23v10.500H12.500zM1 12.500h10.500V23H1zM12.500 12.500H23V23H12.500z" fill="#46b4ee" />
      </Svg>
    ),
  },
  {
    label: "Search",
    icon: (
      <Svg size={24} box={24}>
        <circle cx="14" cy="10" r="7.500" stroke="#f0dff3" strokeWidth="2" fill="none" />
        <path d="M8.500 15.500L3 22" stroke="#f0dff3" strokeWidth="2.500" />
      </Svg>
    ),
  },
  {
    label: "File Explorer",
    state: "open",
    icon: (
      <Svg size={24} box={24}>
        <path d="M1 2h8l2 3h12v5H1z" fill="#c8901c" />
        <path d="M1 7h22v15H1z" fill="#f9cf4c" />
        <path d="M6 16h13v6H6z" fill="#1c6fb5" />
        <path d="M8 14h9v2H8z" fill="#3fa3dd" />
      </Svg>
    ),
  },
  {
    label: "Microsoft Store",
    state: "open",
    icon: (
      <Svg size={24} box={24}>
        <path d="M7 7V2h10v5" fill="none" stroke="#e9e3ea" strokeWidth="2" />
        <path d="M1 6h22v15a2 2 0 0 1-2 2H3a2 2 0 0 1-2-2z" fill="#f6f3f6" />
        <path d="M7 10h4.500v4.500H7z" fill="#e1532c" />
        <path d="M12.500 10H17v4.500h-4.500z" fill="#7cae32" />
        <path d="M7 15.500h4.500V20H7z" fill="#3c9bd8" />
        <path d="M12.500 15.500H17V20h-4.500z" fill="#efb62c" />
      </Svg>
    ),
  },
  {
    label: "Office",
    icon: (
      <Svg size={24} box={24}>
        <path d="M4 6l10-5 6 2v18l-6 2-9-4 9 1V5L8 8v9l-4 2z" fill="#d9461c" />
        <path d="M14 1l6 2v18l-6 2z" fill="#f26a34" />
      </Svg>
    ),
  },
  {
    label: "Run",
    icon: (
      <Svg size={24} box={24}>
        <path d="M6 2l17-1-1 15-14 1z" fill="#a9c7ec" />
        <path d="M8 4l13-1-1 11-11 1z" fill="#3567c6" />
        <path d="M1 5h16v8H1z" fill="#e8f1fb" />
        <path d="M2 6h14v4H2z" fill="#4787dd" />
        <path d="M11 17h6l3 4c-4 2-9 2-12 0z" fill="#ccd5e2" />
      </Svg>
    ),
  },
  {
    label: "Football",
    icon: (
      <Svg size={24} box={24}>
        <rect width="24" height="24" fill="#17101c" />
        <rect x="6" y="3" width="13" height="9" fill="#6f8c5c" />
        <path d="M8 5h4v5H8zM14 5h3v5h-3z" fill="#a9c08f" />
        <circle cx="5" cy="4" r="3" fill="#f4f4f4" />
        <path d="M5 2l1 2-2 1z" fill="#222" />
        <rect x="1" y="14" width="22" height="6" rx="3" fill="#b92b37" />
        <path d="M4 17h16" stroke="#f0d6d8" strokeWidth="3" strokeDasharray="1.500 0.700" />
      </Svg>
    ),
  },
  {
    label: "Facebook",
    icon: (
      <Svg size={22} box={22}>
        <circle cx="11" cy="11" r="10" fill="#1484e8" />
        <FaFacebookF x="4" y="5" size={14} color="#fff" />
      </Svg>
    ),
  },
  {
    label: "Messenger",
    icon: (
      <Svg size={24} box={24}>
        <defs>
          <linearGradient id="chat" x1="0" y1="1" x2="1" y2="0">
            <stop offset="0" stopColor="#3a63ff" />
            <stop offset="0.500" stopColor="#a347ef" />
            <stop offset="1" stopColor="#fb5a7c" />
          </linearGradient>
        </defs>
        <path d="M12 1c6.500 0 11 4.500 11 10.500S18.500 22 12 22l-3-.5L5 23v-3.500C2.500 17.500 1 15 1 11.500 1 5.500 5.500 1 12 1" fill="url(#chat)" />
        <path d="M5 14l5-5.500 4 3 5-3-5 6-4-3z" fill="#fff" />
      </Svg>
    ),
  },
  {
    label: "Mail",
    icon: (
      <Svg size={24} box={24}>
        <path d="M1 8l11-7 11 7v4H1z" fill="#1267b2" />
        <path d="M1 8h22v13a2 2 0 0 1-2 2H3a2 2 0 0 1-2-2z" fill="#2ea3e5" />
        <path d="M1 8h22l-11 7z" fill="#e9f6fd" />
        <path d="M1 21L12 13l11 8-2 2H3z" fill="#49bdf3" />
      </Svg>
    ),
  },
  {
    label: "Football TV",
    icon: (
      <Svg size={24} box={24}>
        <rect width="24" height="24" fill="#24949f" />
        <rect x="5" y="5" width="14" height="8" rx="1" fill="none" stroke="#e3f7f7" />
        <circle cx="12" cy="9" r="2.500" fill="none" stroke="#e3f7f7" />
        <path d="M8 2l4 3 4-3" stroke="#e3f7f7" fill="none" />
        <text x="12" y="19" fontSize="4" fontWeight="700" textAnchor="middle" fill="#fff" fontFamily="Liberation Sans">FOOTBALL</text>
      </Svg>
    ),
  },
  { label: "Chrome", state: "open", icon: <ChromeIcon size={22} /> },
  {
    label: "Bandicam",
    state: "open",
    icon: (
      <Svg size={22} box={22}>
        <circle cx="11" cy="11" r="9.800" fill="#0e0b0c" stroke="#efe9ee" strokeWidth="1.400" />
        <circle cx="11" cy="11" r="6.200" fill="#e2201e" />
      </Svg>
    ),
  },
  {
    label: "Recorder",
    icon: (
      <Svg size={20} box={20}>
        <rect x="2" y="2" width="16" height="16" rx="3" fill="#3ab6e2" />
        <circle cx="10" cy="10" r="5.500" fill="#eafaff" />
        <circle cx="10" cy="10" r="3.500" fill="#ee5634" />
      </Svg>
    ),
  },
  {
    label: "FactoryDownload",
    state: "open",
    icon: (
      <Svg size={22} box={22}>
        <path d="M6 3v6M4 7l2 2 2-2M11 3v6M9 7l2 2 2-2M16 3v6M14 7l2 2 2-2" stroke="#2822cf" strokeWidth="1.500" fill="none" />
        <path d="M4 12l3-2 11 5v4l-3 1L4 16z" fill="#13187f" />
        <path d="M3 17l1 1M7 19l1 1M11 21l1 0M9 10l1 1M13 12l1 0M18 13l1 0" stroke="#c9b7e6" />
      </Svg>
    ),
  },
  { label: "Notepad", state: "active", icon: <PadIcon size={24} /> },
];

const TaskbarView = () => (
  <Taskbar>
    <Apps aria-label="Apps">
      {apps.map((app) => (
        <AppButton type="button" key={app.label} aria-label={app.label} $state={app.state}>
          {app.icon}
        </AppButton>
      ))}
    </Apps>
    <Tray>
      <TrayIcons>
        <TrayButton type="button" aria-label="Hidden icons">
          <Svg size={12} box={12}>
            <path d="M1 9l5-5 5 5" stroke="#e7cdeb" strokeWidth="1.300" fill="none" />
          </Svg>
        </TrayButton>
        <TrayButton type="button" aria-label="Microphone">
          <Svg size={16} box={16}>
            <rect x="5" y="0" width="6" height="11" rx="1" fill="#fff" />
            <path d="M3 9v3h10V9M8 12v3M5 15h6" stroke="#fff" fill="none" />
          </Svg>
        </TrayButton>
        <TrayButton type="button" aria-label="Download manager">
          <IdmIcon size={15} />
        </TrayButton>
        <TrayButton type="button" aria-label="Remote control">
          <Svg size={15} box={15}>
            <rect width="15" height="15" fill="#1277d3" />
            <circle cx="7.500" cy="7.500" r="6.500" fill="#fff" />
            <path d="M1.500 7.500l4-3v2h4v-2l4 3-4 3v-2h-4v2z" fill="#1277d3" />
          </Svg>
        </TrayButton>
        <TrayButton type="button" aria-label="Bluetooth">
          <Svg size={15} box={15}>
            <rect x="2" y="0" width="11" height="15" rx="5" fill="#1683e6" />
            <FaBluetoothB x="3" y="3" size={9} color="#fff" />
          </Svg>
        </TrayButton>
        <TrayButton type="button" aria-label="Battery">
          <Svg size={16} box={16}>
            <rect x="5.500" y="4.500" width="9" height="7" fill="none" stroke="#fff" />
            <path d="M7 6h6v4H7zM15 6h1v4h-1zM1 3v3M4 3v3M0 5h5v2H0zM2 7v4h3" fill="#fff" stroke="#fff" strokeWidth=".6" />
          </Svg>
        </TrayButton>
        <TrayButton type="button" aria-label="Wireless network">
          <Svg size={14} box={14}>
            <path d="M1 13C1 7 6 2 13 2M4 13c0-4 4-8 9-8M7 13c0-3 3-5 6-5" stroke="#d7bcdc" fill="none" />
            <circle cx="11.500" cy="12" r="1.500" fill="#fff" />
          </Svg>
        </TrayButton>
        <TrayButton type="button" aria-label="Volume">
          <Svg size={16} box={16}>
            <path d="M1 6h3l3-3v10l-3-3H1z" fill="none" stroke="#fff" />
            <path d="M9 6c1 1 1 3 0 4M11 4c2 2 2 6 0 8M13 3c3 3 3 7 0 10" stroke="#fff" fill="none" />
          </Svg>
        </TrayButton>
      </TrayIcons>
      <Clock>{"7:30 AM\nMonday\n9/6/2021"}</Clock>
      <TrayButton type="button" aria-label="Notifications">
        <Svg size={16} box={16}>
          <path d="M1 1h14v11h-4l-3 3-3-3H1z" fill="none" stroke="#f2e4f4" />
        </Svg>
      </TrayButton>
    </Tray>
  </Taskbar>
);

export default function App() {
  return (
    <>
      <GlobalStyle />
      <Screen>
        <Desktop>
          <Wallpaper viewBox="0 0 1274 60" preserveAspectRatio="none" aria-hidden="true">
            <defs>
              <linearGradient id="base" x1="0" x2="1" y1="0" y2="0">
                <stop offset="0.140" stopColor="#0a0228" stopOpacity="0" />
                <stop offset="0.220" stopColor="#210849" />
                <stop offset="0.340" stopColor="#3d1878" />
                <stop offset="0.600" stopColor="#93305e" />
                <stop offset="0.700" stopColor="#8a1f30" />
                <stop offset="0.780" stopColor="#74120f" />
                <stop offset="0.860" stopColor="#4c0a06" />
                <stop offset="0.950" stopColor="#3a0604" stopOpacity="0" />
              </linearGradient>
              <linearGradient id="petal" x1="0" x2="0.700" y1="0" y2="1">
                <stop offset="0" stopColor="#6f2a72" />
                <stop offset="0.450" stopColor="#9a4494" />
                <stop offset="0.620" stopColor="#bb62b8" />
                <stop offset="0.850" stopColor="#c88272" />
                <stop offset="1" stopColor="#c07a60" />
              </linearGradient>
              <linearGradient id="flare" x1="0" x2="1">
                <stop offset="0" stopColor="#c0604a" />
                <stop offset="1" stopColor="#8a50c0" />
              </linearGradient>
            </defs>
            <rect width="1274" height="60" fill="url(#base)" />
            <path d="M400 10 Q440 45 480 60 H560 V0z" fill="url(#flare)" />
            <path d="M740 0 H890 Q850 42 798 60 H740z" fill="url(#petal)" />
          </Wallpaper>
          <Icons columns={leftColumns} />
          <Icons columns={rightColumns} end />
          <BuildNote>{"Test Mode\nWindows 11 Home\nBuild 21996.co_release.210529-1541"}</BuildNote>
          <ExplorerWindow />
          <RecorderBar />
          <Watermark>
            www.<b>BANDICAM</b>.COM
          </Watermark>
          <MediaPlayer />
          <FlashTool />
          <NoteShadow />
          <NotepadWindow />
          <Pointer width="12" height="36" viewBox="0 0 12 36" aria-hidden="true">
            <path d="M6 1l4 5H7v9l3 3H7v12h3l-4 5-4-5h3V18H2l3-3V6H2z" fill="#fff" stroke="#222" strokeWidth=".8" />
          </Pointer>
        </Desktop>
        <TaskbarView />
      </Screen>
    </>
  );
}
